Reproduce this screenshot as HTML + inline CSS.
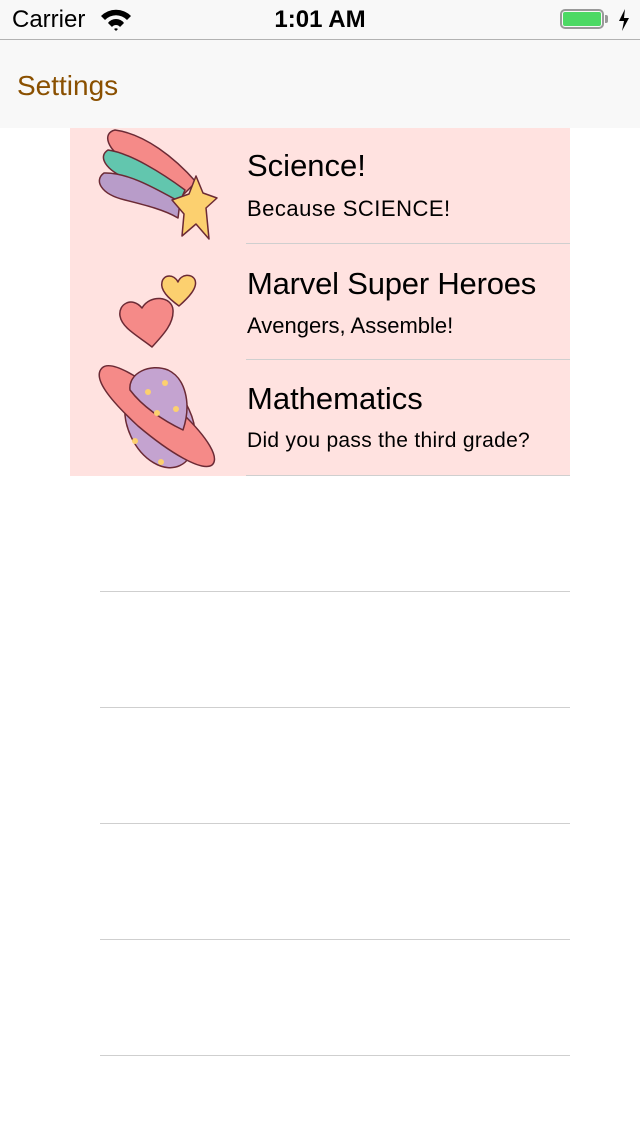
<!DOCTYPE html>
<html><head><style>
body{margin:0;width:640px;height:1136px;background:#fff;font-family:"Liberation Sans",sans-serif;position:relative;overflow:hidden}
.a{position:absolute}
.sep{position:absolute;height:1px;background:#cfcfcf;right:70px}
.t{position:absolute;left:247px;font-size:31px;color:#000}
.s{position:absolute;left:247px;font-size:22px;color:#000}
</style></head><body>
<div class="a" style="left:0;top:0;width:640px;height:39px;background:#f8f8f8"></div>
<div class="a" style="left:12px;top:6px;font-size:24px">Carrier</div>
<svg class="a" style="left:100px;top:9px" width="32" height="22" viewBox="0 0 32 22"><path d="M1 7 A21 21 0 0 1 31 7 L27 11 A15 15 0 0 0 5 11Z M8 14 A10 10 0 0 1 24 14 L20 18 A5 5 0 0 0 12 18Z M14 20 L16 22 L18 20 A3 3 0 0 0 14 20Z" fill="#000"/></svg>
<div class="a" style="left:0;width:640px;top:6px;text-align:center;font-size:24px;font-weight:bold">1:01 AM</div>
<div class="a" style="left:560px;top:9px;width:44px;height:20px;border:2px solid #999;border-radius:5px;box-sizing:border-box"></div>
<div class="a" style="left:563px;top:12px;width:38px;height:14px;background:#4cd964;border-radius:2px"></div>
<div class="a" style="left:605px;top:15px;width:3px;height:8px;background:#999;border-radius:0 2px 2px 0"></div>
<svg class="a" style="left:618px;top:9px" width="12" height="22" viewBox="0 0 12 22"><path d="M7 0 L1 12 H6 L4 22 L11 9 H6Z" fill="#000"/></svg>
<div class="a" style="left:0;top:39px;width:640px;height:1px;background:#b2b2b2"></div>
<div class="a" style="left:0;top:40px;width:640px;height:88px;background:#f8f8f8"></div>
<div class="a" style="left:17px;top:70px;font-size:28px;color:#8a5000">Settings</div>
<div class="a" style="left:70px;top:128px;width:500px;height:348px;background:#ffe2e0"></div>
<svg class="a" style="left:70px;top:128px" width="176" height="348" viewBox="0 0 176 348">
<g stroke="#6b2a35" stroke-width="1.5" stroke-linejoin="round">
<path d="M45 2 C32 5 36 22 60 35 C80 46 100 58 112 68 L126 54 C105 30 75 6 45 2Z" fill="#f58a88"/>
<path d="M38 22 C28 28 34 42 60 52 C80 60 98 70 108 78 L115 62 C92 45 60 25 38 22Z" fill="#62c6ae"/>
<path d="M34 45 C24 52 30 66 55 72 C75 77 95 82 108 90 L110 74 C88 62 58 44 34 45Z" fill="#b89cc9"/>
<path d="M126 48 L133 65 L147 70 L136 80 L139 111 L126 96 L112 108 L114 86 L102 72 L119 66Z" fill="#fcd06f"/>
<path d="M109 178 C98 170 90 162 92 154 C94 146 104 146 108 154 C111 146 122 145 125 152 C128 160 118 170 109 178Z" fill="#fcd06f"/>
<path d="M82 219 C68 208 52 200 50 188 C48 176 62 168 72 180 C80 166 102 168 103 182 C104 196 92 208 82 219Z" fill="#f58a88"/>
<ellipse cx="90" cy="295" rx="32" ry="47" transform="rotate(-25 90 295)" fill="#c4a3d0"/>
<path d="M32 240 C42 230 80 255 112 285 C138 310 150 330 142 337 C132 344 100 325 68 298 C40 272 22 250 32 240Z" fill="#f58a88"/>
<path d="M60 262 C58 245 80 235 98 242 C115 250 122 275 113 302 C92 292 72 278 60 262Z" fill="#c4a3d0"/>
</g>
<g fill="#fcd06f"><circle cx="78" cy="264" r="3"/><circle cx="95" cy="255" r="3"/><circle cx="106" cy="281" r="3"/><circle cx="87" cy="285" r="3"/><circle cx="65" cy="313" r="3"/><circle cx="91" cy="334" r="3"/></g>
</svg>
<div class="t" style="top:148px">Science!</div>
<div class="s" style="top:196px;font-size:22px;letter-spacing:0.5px">Because SCIENCE!</div>
<div class="sep" style="left:246px;top:243px"></div>
<div class="t" style="top:266px;letter-spacing:-0.2px">Marvel Super Heroes</div>
<div class="s" style="top:313px">Avengers, Assemble!</div>
<div class="sep" style="left:246px;top:359px"></div>
<div class="t" style="top:381px">Mathematics</div>
<div class="s" style="top:429px;font-size:21px;letter-spacing:0.3px">Did you pass the third grade?</div>
<div class="sep" style="left:246px;top:475px"></div>
<div class="sep" style="left:100px;top:591px"></div>
<div class="sep" style="left:100px;top:707px"></div>
<div class="sep" style="left:100px;top:823px"></div>
<div class="sep" style="left:100px;top:939px"></div>
<div class="sep" style="left:100px;top:1055px"></div>
</body></html>
